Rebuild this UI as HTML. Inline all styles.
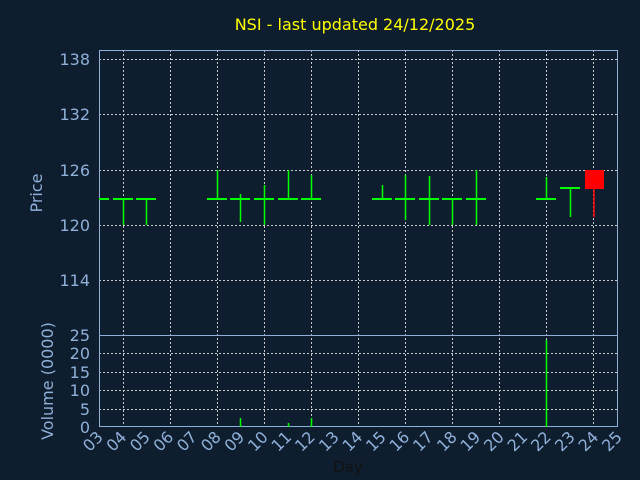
<!DOCTYPE html><html><head><style>body{margin:0;background:#0f1e2f;}svg{display:block}</style></head><body>
<svg width="640" height="480" xmlns="http://www.w3.org/2000/svg" font-family="DejaVu Sans, Liberation Sans, sans-serif">
<rect width="640" height="480" fill="#0f1e2f"/>
<text x="355" y="30" fill="#ffff00" font-size="16" text-anchor="middle">NSI - last updated 24/12/2025</text>
<g stroke="#c8c8c8" stroke-dasharray="2,2" stroke-width="1">
<path d="M123.5 50V427M170.5 50V427M217.5 50V427M264.5 50V427M311.5 50V427M358.5 50V427M405.5 50V427M452.5 50V427M499.5 50V427M546.5 50V427M593.5 50V427"/>
<path d="M99 59.5H617M99 114.5H617M99 170.5H617M99 225.5H617M99 280.5H617M99 353.5H617M99 372.5H617M99 390.5H617M99 409.5H617"/>
</g>
<g stroke="#8fb0d8" fill="none">
<rect x="99.5" y="50.5" width="518" height="376"/>
<path d="M99 335.5H617"/>
</g>
<g fill="#8fb0d8" font-size="16" text-anchor="end">
<text x="90" y="65">138</text><text x="90" y="120">132</text><text x="90" y="176">126</text><text x="90" y="231">120</text><text x="90" y="286">114</text>
<text x="90" y="341">25</text><text x="90" y="359">20</text><text x="90" y="378">15</text><text x="90" y="396">10</text><text x="90" y="415">5</text><text x="90" y="433">0</text>
</g>
<text transform="translate(42,193) rotate(-90)" fill="#8fb0d8" font-size="16" text-anchor="middle">Price</text>
<text transform="translate(53,381) rotate(-90)" fill="#8fb0d8" font-size="16" text-anchor="middle">Volume (0000)</text>
<text x="348" y="472" fill="#111" font-size="15" text-anchor="middle">Day</text>
<g fill="#8fb0d8" font-size="16" text-anchor="end">
<text transform="translate(104,438) rotate(-45)">03</text>
<text transform="translate(127.5,438) rotate(-45)">04</text>
<text transform="translate(151,438) rotate(-45)">05</text>
<text transform="translate(174.5,438) rotate(-45)">06</text>
<text transform="translate(198,438) rotate(-45)">07</text>
<text transform="translate(222,438) rotate(-45)">08</text>
<text transform="translate(245.5,438) rotate(-45)">09</text>
<text transform="translate(269,438) rotate(-45)">10</text>
<text transform="translate(292.5,438) rotate(-45)">11</text>
<text transform="translate(316,438) rotate(-45)">12</text>
<text transform="translate(340,438) rotate(-45)">13</text>
<text transform="translate(363.5,438) rotate(-45)">14</text>
<text transform="translate(387,438) rotate(-45)">15</text>
<text transform="translate(410.5,438) rotate(-45)">16</text>
<text transform="translate(434,438) rotate(-45)">17</text>
<text transform="translate(458,438) rotate(-45)">18</text>
<text transform="translate(481.5,438) rotate(-45)">19</text>
<text transform="translate(505,438) rotate(-45)">20</text>
<text transform="translate(528.5,438) rotate(-45)">21</text>
<text transform="translate(552,438) rotate(-45)">22</text>
<text transform="translate(576,438) rotate(-45)">23</text>
<text transform="translate(599.5,438) rotate(-45)">24</text>
<text transform="translate(623,438) rotate(-45)">25</text>
</g>
<g stroke="#00ff00" stroke-width="2">
<path d="M99 199H109M113 199H133M136 199H156M207 199H227M230 199H250M254 199H274M278 199H298M301 199H321M372 199H392M395 199H415M419 199H439M442 199H462M466 199H486M536 199H556M560 188H580"/>
</g>
<g stroke="#00ff00" stroke-width="1.5">
<path d="M123.5 199V225M146.5 199V225M217.5 170V199M240.5 194V222M264.5 185V225M288.5 170V199M311.5 175V199M382.5 185V199M405.5 175V220M429.5 176V225M452.5 199V225M476.5 170V225M546.5 177V199M570.5 188V217"/>
<path d="M546.5 340V427M240.5 418V427M288.5 423V427M311.5 418V427"/>
</g>
<rect x="585" y="170" width="19" height="19" fill="#ff0000"/>
<path d="M594 189V217" stroke="#ff0000" stroke-width="1.5"/>
</svg>
</body></html>
